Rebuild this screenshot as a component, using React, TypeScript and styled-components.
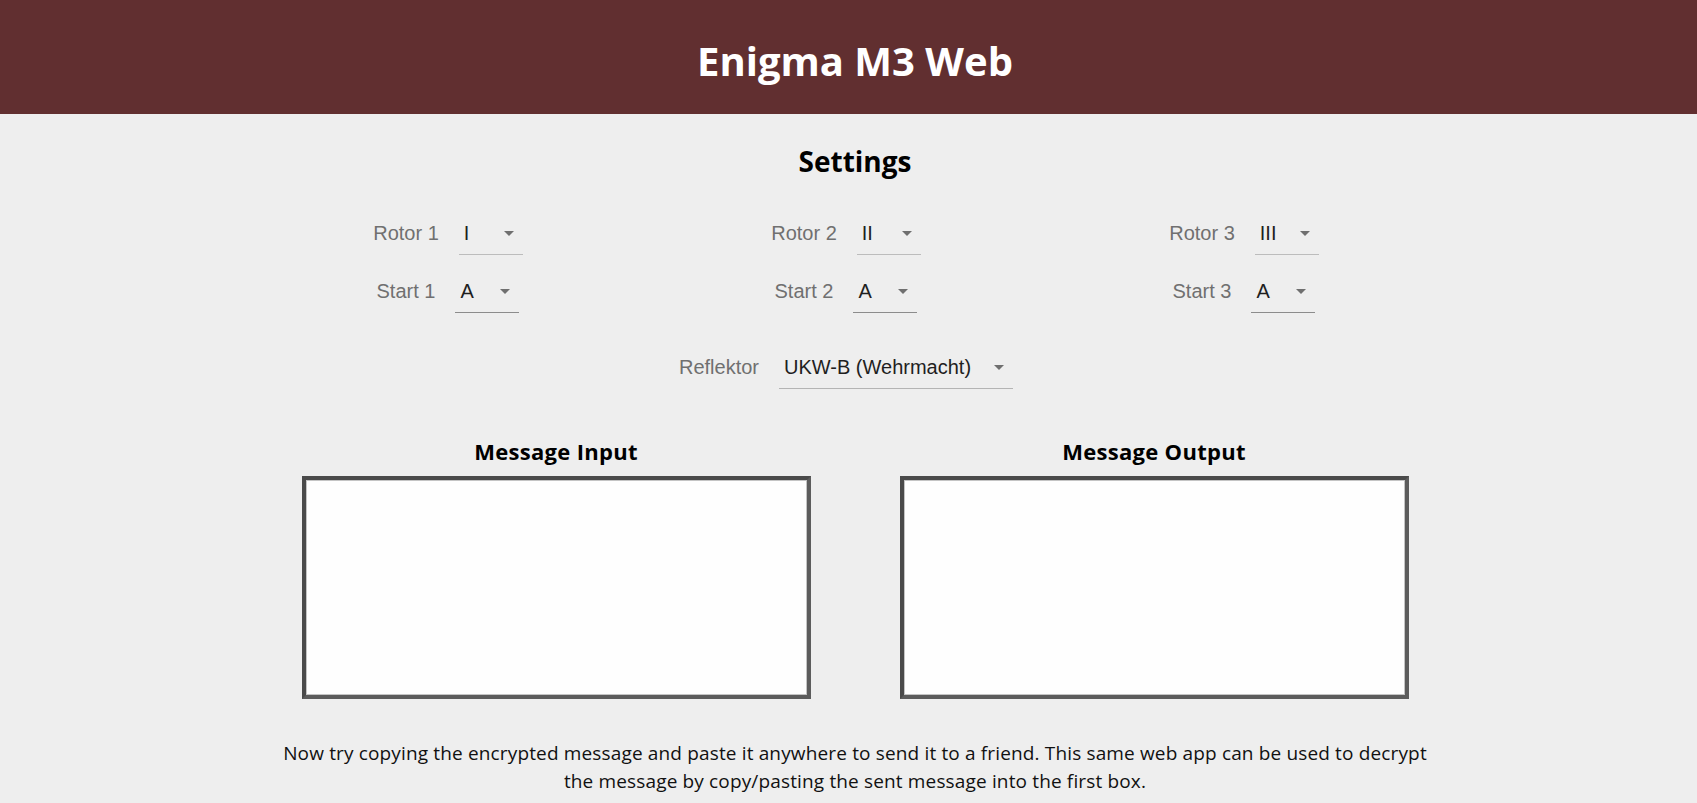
import React from "react";
import styled, { createGlobalStyle } from "styled-components";

const GlobalStyle = createGlobalStyle`
  html, body { margin: 0; padding: 0; background: #eeeeee; }
  body { font-family: "Open Sans", "Noto Sans", sans-serif; }
  * { box-sizing: border-box; }
`;

const Header = styled.header`
  height: 114px;
  background: #612f30;
  display: flex;
  align-items: center;
  justify-content: center;
  padding-left: 13px;
`;

const Title = styled.h1`
  margin: 0;
  padding-top: 8px;
  color: #ffffff;
  font-family: "Open Sans", sans-serif;
  font-weight: 700;
  font-size: 40px;
  line-height: 48px;
`;

const Main = styled.main`
  padding-left: 13px;
  display: flex;
  flex-direction: column;
  align-items: stretch;
`;

const SectionTitle = styled.h2`
  margin: 29px 0 0;
  text-align: center;
  font-family: "Open Sans", sans-serif;
  font-weight: 700;
  font-size: 28px;
  line-height: 36px;
  color: #000;
`;

const SettingsPanel = styled.section`
  padding-right: 18px;
  display: flex;
  flex-direction: column;
  align-items: center;
`;

const RotorGrid = styled.div`
  margin-top: 37px;
  display: grid;
  grid-template-columns: repeat(3, 398px);
  justify-content: center;
`;

const RotorColumn = styled.div`
  display: flex;
  flex-direction: column;
  align-items: center;
  gap: 19px;
`;

const FieldRow = styled.div<{ $mt?: number }>`
  display: flex;
  align-items: flex-start;
  gap: 20px;
  margin-top: ${(p) => p.$mt ?? 0}px;
`;

const FieldLabel = styled.span`
  padding-top: 6px;
  font-family: "Liberation Sans", Arial, sans-serif;
  font-size: 20px;
  line-height: 23px;
  color: #707070;
  white-space: nowrap;
`;

const SelectBox = styled.div<{ $w: number; $line: string }>`
  width: ${(p) => p.$w}px;
  display: flex;
  align-items: flex-start;
  justify-content: space-between;
  padding: 6px 0 9px 5px;
  border-bottom: 1px solid ${(p) => p.$line};
  cursor: pointer;
`;

const SelectValue = styled.span`
  font-family: "Liberation Sans", Arial, sans-serif;
  font-size: 20px;
  line-height: 23px;
  color: #1f1f1f;
  white-space: nowrap;
`;

const ArrowIcon = styled.svg`
  width: 24px;
  height: 24px;
  margin: -1px 2px 0 0;
  flex: none;
  fill: #6f6f6f;
`;

const MessageGrid = styled.div`
  margin-top: 48px;
  display: grid;
  grid-template-columns: 509px 509px;
  column-gap: 89px;
  justify-content: center;
`;

const MessageColumn = styled.div`
  display: flex;
  flex-direction: column;
  align-items: stretch;
`;

const MessageTitle = styled.h3`
  margin: 0 0 11px;
  text-align: center;
  font-family: "Open Sans", sans-serif;
  font-weight: 700;
  font-size: 22px;
  letter-spacing: 0.3px;
  line-height: 28px;
  color: #000;
`;

const MessageBox = styled.textarea`
  display: block;
  width: 509px;
  height: 223px;
  margin: 0;
  resize: none;
  background: #fefefe;
  border-style: solid;
  border-width: 4px;
  border-color: #4a4a4a #5c5c5c #5c5c5c #4a4a4a;
  box-shadow: inset 0 0 0 1px #c4c4c4;
  font-family: "Liberation Mono", monospace;
  font-size: 14px;
  padding: 4px;
  outline: none;
`;

const Note = styled.p`
  margin: 40px auto 0;
  max-width: 1160px;
  text-align: center;
  font-family: "Open Sans", sans-serif;
  font-size: 19px;
  letter-spacing: 0.15px;
  line-height: 28px;
  color: #111;
`;

function Arrow() {
  return (
    <ArrowIcon viewBox="0 0 24 24" aria-hidden="true">
      <path d="M7 10l5 5 5-5z" />
    </ArrowIcon>
  );
}

type FieldProps = { label: string; value: string; width: number; line: string; mt?: number };

function Field({ label, value, width, line, mt }: FieldProps) {
  return (
    <FieldRow $mt={mt}>
      <FieldLabel>{label}</FieldLabel>
      <SelectBox $w={width} $line={line}>
        <SelectValue>{value}</SelectValue>
        <Arrow />
      </SelectBox>
    </FieldRow>
  );
}

const rotors = [
  { n: 1, rotor: "I" },
  { n: 2, rotor: "II" },
  { n: 3, rotor: "III" },
];

export default function App() {
  return (
    <>
      <GlobalStyle />
      <Header>
        <Title>Enigma M3 Web</Title>
      </Header>
      <Main>
        <SectionTitle>Settings</SectionTitle>
        <SettingsPanel>
          <RotorGrid>
            {rotors.map((r) => (
              <RotorColumn key={r.n}>
                <Field label={`Rotor ${r.n}`} value={r.rotor} width={64} line="#bcbcbc" />
                <Field label={`Start ${r.n}`} value="A" width={64} line="#8c8c8c" />
              </RotorColumn>
            ))}
          </RotorGrid>
          <Field label="Reflektor" value="UKW-B (Wehrmacht)" width={234} line="#b4b4b4" mt={37} />
        </SettingsPanel>
        <MessageGrid>
          <MessageColumn>
            <MessageTitle>Message Input</MessageTitle>
            <MessageBox />
          </MessageColumn>
          <MessageColumn>
            <MessageTitle>Message Output</MessageTitle>
            <MessageBox readOnly />
          </MessageColumn>
        </MessageGrid>
        <Note>
          Now try copying the encrypted message and paste it anywhere to send it to a friend. This same web app can be
          used to decrypt the message by copy/pasting the sent message into the first box.
        </Note>
      </Main>
    </>
  );
}
